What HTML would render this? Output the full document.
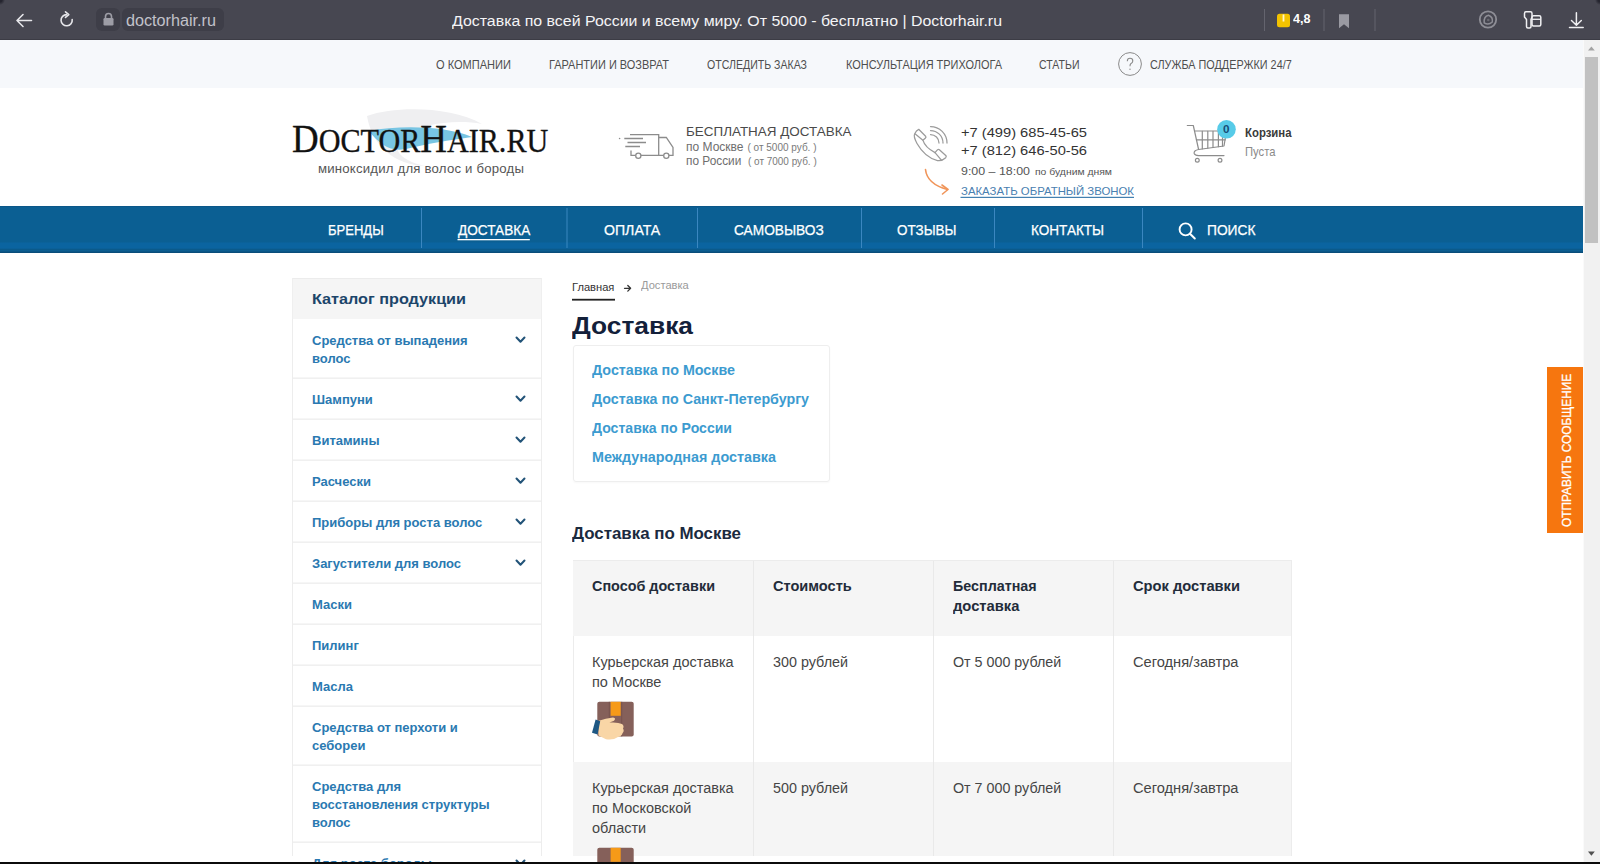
<!DOCTYPE html>
<html><head><meta charset="utf-8">
<style>
*{margin:0;padding:0;box-sizing:border-box}
html,body{width:1600px;height:864px;overflow:hidden;background:#fff;font-family:"Liberation Sans",sans-serif}
.a{position:absolute;white-space:nowrap;transform-origin:0 0}
.r{position:absolute}
svg{position:absolute;overflow:visible}
</style></head><body>
<!-- browser chrome -->
<div class="r" style="left:0;top:0;width:1600px;height:40px;background:#474751"></div>
<div class="r" style="left:0;top:0;width:6px;height:5px;background:radial-gradient(circle at 0 0,#25252f 0,#25252f 2px,rgba(71,71,81,0) 5px)"></div>
<div class="r" style="left:1594px;top:0;width:6px;height:5px;background:radial-gradient(circle at 100% 0,#25252f 0,#25252f 2px,rgba(71,71,81,0) 5px)"></div>
<div class="r" style="left:96px;top:8px;width:24px;height:23px;border-radius:6px;background:#3e3e48"></div>
<div class="r" style="left:122px;top:8px;width:102px;height:23px;border-radius:6px;background:#3e3e48"></div>
<svg style="left:0;top:0" width="1600" height="40">
  <!-- back arrow -->
  <path d="M31.5 20.5H17M23 14.5L17 20.5L23 26.5" fill="none" stroke="#e6e6ea" stroke-width="1.6" stroke-linecap="round" stroke-linejoin="round"/>
  <!-- reload -->
  <path d="M72.2 19.5A5.6 5.6 0 1 1 66.6 14.6" fill="none" stroke="#e6e6ea" stroke-width="1.6" stroke-linecap="round"/>
  <path d="M65.5 11.8L68.8 14.6L65.5 17.4" fill="none" stroke="#e6e6ea" stroke-width="1.6" stroke-linecap="round" stroke-linejoin="round"/>
  <!-- lock -->
  <rect x="103.5" y="18" width="10" height="7.5" rx="1.2" fill="#9d9da6"/>
  <path d="M105.5 18.5V16.5A3 3 0 0 1 111.5 16.5V18.5" fill="none" stroke="#9d9da6" stroke-width="1.6"/>
  <!-- separators -->
  <rect x="1264" y="9" width="1" height="22" fill="#64646e"/>
  <rect x="1323.5" y="9" width="1" height="22" fill="#64646e"/>
  <rect x="1374.5" y="9" width="1" height="22" fill="#64646e"/>
  <!-- rating icon -->
  <rect x="1277" y="13.8" width="13" height="13.5" rx="2.5" fill="#f2c200"/>
  <rect x="1282.6" y="14.5" width="1.8" height="7" fill="#fff6c8"/>
  <!-- bookmark -->
  <path d="M1339 14.2H1349V28.2L1344 24.2L1339 28.2Z" fill="#9a9aa2"/>
  <!-- alice -->
  <circle cx="1488" cy="19.5" r="8.2" fill="none" stroke="#8e8e96" stroke-width="1.8"/>
  <path d="M1484.2 22.8Q1483.5 16.5 1488.5 15.2Q1493.2 16.8 1492.3 22Q1488.5 25.5 1484.2 22.8Z" fill="none" stroke="#8e8e96" stroke-width="1.5" stroke-linejoin="round"/>
  <circle cx="1488.3" cy="20" r="1.3" fill="#6a6a72"/>
  <!-- extensions -->
  <path d="M1524.5 13.5Q1524.5 11.8 1526 11.8H1530.5Q1532 11.8 1532 13.5V17L1531 19.5V26.5Q1531 28 1529.5 28H1528Q1526.5 28 1526.5 26.5V19.5L1524.5 17Z" fill="none" stroke="#f0f0f2" stroke-width="1.5" stroke-linejoin="round"/>
  <rect x="1532" y="15.8" width="8.8" height="10.2" rx="1.5" fill="none" stroke="#f0f0f2" stroke-width="1.5"/>
  <line x1="1532" y1="19.3" x2="1540.8" y2="19.3" stroke="#f0f0f2" stroke-width="1.3"/>
  <!-- download -->
  <path d="M1576.4 12.7V25M1571.5 20.5L1576.4 25.2L1581.3 20.5M1569.5 27.6H1583.2" fill="none" stroke="#f0f0f2" stroke-width="1.5" stroke-linecap="round" stroke-linejoin="round"/>
</svg>

<!-- top bar -->
<div class="r" style="left:0;top:40px;width:1584px;height:48px;background:#f6f8fb"></div>
<div class="r" style="left:0;top:39px;width:1600px;height:1px;background:#3c3c45"></div>
<svg style="left:0;top:0" width="1600" height="100">
  <circle cx="1130" cy="64" r="11.4" fill="none" stroke="#8a8a8a" stroke-width="1"/>
  <path d="M1127.3 61.2Q1127.3 58.3 1130 58.3Q1132.8 58.3 1132.8 61Q1132.8 62.6 1130.8 63.7Q1130 64.3 1130 66.2" fill="none" stroke="#8a8a8a" stroke-width="1.1"/>
  <circle cx="1130" cy="69.2" r="0.7" fill="#8a8a8a"/>
</svg>

<!-- logo -->
<svg style="left:0;top:0" width="600" height="200">
  <path d="M367 116C395 106 450 106 482 124C455 119 420 124 404 136C390 147 398 160 425 166C395 165 372 146 367 116Z" fill="#efeff1"/>
  <path d="M369 131C400 125 446 126 472 137C450 140 426 144 406 149C391 152 380 145 369 131Z" fill="#78c5e3"/>
</svg>
<div class="a" style="left:292px;top:117.5px;font-family:'Liberation Serif',serif;color:#111;-webkit-text-stroke:0.35px #111;line-height:40px;white-space:nowrap;transform-origin:0 0;transform:scaleX(0.9)">
<span style="font-size:41px">D</span><span style="font-size:33.5px">OCTOR</span><span style="font-size:41px">H</span><span style="font-size:33.5px">AIR.RU</span>
</div>
<div class="a" id="tag" style="left:318px;top:162px;font-size:13.2px;line-height:14px;color:#555;letter-spacing:0.2px">миноксидил для волос и бороды</div>

<!-- truck -->
<svg style="left:0;top:0" width="1600" height="210">
  <g fill="none" stroke="#8c8c8c" stroke-width="1.3">
    <path d="M630 134.7H658.7V155.3"/>
    <path d="M658.7 137.5H666.3L673 147.5V155.3H669"/>
    <path d="M631 150.5V155.3H635.5M641 155.3H663.5"/>
    <circle cx="638.3" cy="155.8" r="2.6"/>
    <circle cx="666.3" cy="155.8" r="2.6"/>
    <path d="M624.3 138.5H643M627.5 142.5H646M625.3 146.5H640"/>
  </g>
  <circle cx="619.6" cy="138.5" r="0.8" fill="#8c8c8c"/>
  <!-- phone -->
  <g fill="none" stroke="#9b9b9b" stroke-width="1.25" stroke-linejoin="round" stroke-linecap="round">
    <path d="M918.7 129.3L925.6 136.2Q926.4 137.2 925.5 138.1L922.9 140.2Q925 147.5 935 152.6L937.4 149.9Q938.4 148.9 939.4 149.7L946 155.7Q946.6 156.6 945.7 157.7Q942 161.2 937.5 160.6Q925 157.5 917 143.5Q913.2 136.5 914.7 133.8Q916.3 130.2 918.7 129.3Z"/>
    <path d="M915 133.8L922.9 140.2M935 152.6L941 159.7"/>
    <path d="M930.5 134.5A8.5 8.5 0 0 1 939 143M930.5 130.5A12.5 12.5 0 0 1 943 143M930.5 126.5A16.5 16.5 0 0 1 947 143"/>
  </g>
  <!-- orange arrow -->
  <path d="M925.5 169.5Q927 184 947.5 189.5" fill="none" stroke="#f0955a" stroke-width="1.6" stroke-linecap="round"/>
  <path d="M942 185L948 189.5L942.5 194" fill="none" stroke="#f0955a" stroke-width="1.6" stroke-linecap="round" stroke-linejoin="round"/>
  <!-- underline callback -->
  <rect x="960.5" y="196.8" width="173.5" height="1.1" fill="#2f73a8"/>
  <!-- cart -->
  <g fill="none" stroke="#8c8c8c" stroke-width="1.2" stroke-linejoin="round" stroke-linecap="round">
    <path d="M1187.3 125.5H1193.3L1198.6 149.5"/>
    <path d="M1194.8 131H1226.5L1224 146L1198.6 149.5"/>
    <path d="M1196.4 139.8H1225.3"/>
    <path d="M1202.3 131.3V148.8M1207.8 131.3V148.1M1213 131.3V147.4M1218.4 131.3V146.7M1222.5 131.3V146.2"/>
    <path d="M1198.6 149.5Q1193.5 150.5 1194.2 153.5Q1195 155.6 1198.5 155.6H1224"/>
    <circle cx="1197.3" cy="160.3" r="1.9"/>
    <circle cx="1220" cy="160.3" r="1.9"/>
  </g>
  <circle cx="1226.5" cy="129.3" r="9.3" fill="#57cbe8"/>
</svg>

<!-- nav -->
<div class="r" style="left:0;top:206px;width:1583px;height:47px;background:linear-gradient(to bottom,#0a5283 0px,#0b5f93 1.5px,#0b5f93 36px,#0b64a0 37px,#0b64a0 42px,#0b5a8b 43.5px,#0b5f94 45px,#094d7a 46px,#094d7a 47px)"></div>
<svg style="left:0;top:200px" width="1600" height="60">
  <g fill="#3b87c0">
    <rect x="421" y="8" width="1" height="40"/>
    <rect x="566.5" y="8" width="1" height="40"/>
    <rect x="697" y="8" width="1" height="40"/>
    <rect x="861" y="8" width="1" height="40"/>
    <rect x="994" y="8" width="1" height="40"/>
    <rect x="1142" y="8" width="1" height="40"/>
  </g>
  <rect x="457.5" y="39" width="72.3" height="1.3" fill="#fff"/>
  <circle cx="1185.6" cy="29.4" r="6" fill="none" stroke="#fff" stroke-width="1.9"/>
  <path d="M1190 33.8L1194.8 38.5" stroke="#fff" stroke-width="2" stroke-linecap="round"/>
</svg>

<!-- sidebar -->
<div class="r" style="left:292px;top:278px;width:250px;height:578px;border:1px solid #ededed;border-top:0;border-bottom:0"></div>
<div class="r" style="left:292px;top:277.5px;width:250px;height:41.5px;background:#f5f5f5;border-top:1px solid #ececec;border-left:1px solid #efefef;border-right:1px solid #efefef"></div>
<svg style="left:0;top:0" width="600" height="864">
  <g fill="#ededed">
    <rect x="293" y="377.5" width="248" height="1.3"/>
    <rect x="293" y="418.5" width="248" height="1.3"/>
    <rect x="293" y="459.5" width="248" height="1.3"/>
    <rect x="293" y="500.5" width="248" height="1.3"/>
    <rect x="293" y="541.5" width="248" height="1.3"/>
    <rect x="293" y="582.5" width="248" height="1.3"/>
    <rect x="293" y="623.5" width="248" height="1.3"/>
    <rect x="293" y="664.5" width="248" height="1.3"/>
    <rect x="293" y="705.5" width="248" height="1.3"/>
    <rect x="293" y="764.5" width="248" height="1.3"/>
    <rect x="293" y="841.5" width="248" height="1.3"/>
  </g>
  <g fill="none" stroke="#225378" stroke-width="2" stroke-linecap="round" stroke-linejoin="round">
    <path d="M516.5 337.5L520.5 341.8L524.5 337.5"/>
    <path d="M516.5 396.5L520.5 400.8L524.5 396.5"/>
    <path d="M516.5 437.5L520.5 441.8L524.5 437.5"/>
    <path d="M516.5 478.5L520.5 482.8L524.5 478.5"/>
    <path d="M516.5 519.5L520.5 523.8L524.5 519.5"/>
    <path d="M516.5 560.5L520.5 564.8L524.5 560.5"/>
    <path d="M516.5 860.5L520.5 864.8L524.5 860.5"/>
  </g>
</svg>

<!-- main -->
<svg style="left:0;top:0" width="1600" height="864">
  <rect x="572" y="298.8" width="43" height="1.8" fill="#222"/>
  <path d="M624.5 288.3H630.5M627.8 285.5L630.6 288.3L627.8 291.1" fill="none" stroke="#333" stroke-width="1.3" stroke-linecap="round" stroke-linejoin="round"/>
</svg>
<div class="r" style="left:572.5px;top:344.5px;width:257px;height:137px;border:1px solid #eeeeee;border-radius:3px;box-shadow:0 1px 2px rgba(0,0,0,0.03)"></div>

<!-- table -->
<div class="r" style="left:572.5px;top:560.3px;width:719px;height:295.7px;border:1px solid #ececec;border-bottom:0;background:#fff"></div>
<div class="r" style="left:573px;top:561px;width:718px;height:75.2px;background:#f5f5f5"></div>
<div class="r" style="left:573px;top:761.5px;width:718px;height:94.5px;background:#f5f5f5"></div>
<svg style="left:0;top:0" width="1600" height="864">
  <g fill="#e9e9e9">
    <rect x="753" y="561" width="1" height="295"/>
    <rect x="933" y="561" width="1" height="295"/>
    <rect x="1113" y="561" width="1" height="295"/>
  </g>
  <!-- box icon 1 -->
  <g id="box1">
    <rect x="597.3" y="701.8" width="36.4" height="34.6" rx="2" fill="#85605a"/>
    <rect x="610.6" y="701.8" width="10.1" height="14" fill="#f69a18"/>
    <rect x="608.8" y="701.8" width="1" height="34.6" fill="#77534e"/>
    <rect x="621.2" y="701.8" width="1" height="34.6" fill="#77534e"/>
    <path d="M598 721Q606 718 613 717.5Q616.5 718 614 720.8L609.5 722.6Q618 722 622 724Q624.5 726 623 728.5Q624.6 731 622.5 733.2Q622 736 618 737Q613 740.5 606 739.2L598.5 735.5Z" fill="#f9d6a6"/>
    <path d="M592 732.8L595.6 719.6L600.2 721.2L597.6 734.4Z" fill="#1e5783"/>
  </g>
  <g transform="translate(0,146)">
    <rect x="597.3" y="701.8" width="36.4" height="34.6" rx="2" fill="#85605a"/>
    <rect x="610.6" y="701.8" width="10.1" height="14" fill="#f69a18"/>
  </g>
</svg>

<!-- orange tab -->
<div class="r" style="left:1547px;top:367px;width:35.7px;height:166px;background:#f6760f"></div>
<div class="a" style="left:1560.6px;top:526.7px;font-size:12.6px;line-height:12.6px;color:#fff;-webkit-text-stroke:0.3px #fff;transform:rotate(-90deg) scaleX(0.941);transform-origin:0 0">ОТПРАВИТЬ СООБЩЕНИЕ</div>

<!-- scrollbar -->
<div class="r" style="left:1584px;top:40px;width:16px;height:824px;background:#f1f1f1"></div>
<div class="r" style="left:1583px;top:40px;width:1px;height:824px;background:#fafafa"></div>
<div class="r" style="left:1585px;top:56.5px;width:13px;height:186.6px;background:#c1c1c1"></div>
<svg style="left:0;top:0" width="1600" height="864">
  <path d="M1588 50.6L1591.4 46.4L1594.8 50.6Z" fill="#a3a3a3"/>
  <path d="M1588 851.5L1591.4 855.7L1594.8 851.5Z" fill="#505050"/>
</svg>
<div class="a" style="left:126.00px;top:13.40px;font-size:16px;line-height:16px;color:#c2c2ca;transform:scaleX(1.0119)">doctorhair.ru</div>
<div class="a" style="left:452.00px;top:12.83px;font-size:15.5px;line-height:15.5px;color:#f4f4f6;transform:scaleX(1.0261)">Доставка по всей России и всему миру. От 5000 - бесплатно | Doctorhair.ru</div>
<div class="a" style="left:1293.00px;top:13.38px;font-size:12.5px;line-height:12.5px;color:#ffffff;font-weight:bold;transform:scaleX(1.0071)">4,8</div>
<div class="a" style="left:436.00px;top:58.55px;font-size:12.3px;line-height:12.3px;color:#4e4e4e;transform:scaleX(0.8991)">О КОМПАНИИ</div>
<div class="a" style="left:549.00px;top:58.55px;font-size:12.3px;line-height:12.3px;color:#4e4e4e;transform:scaleX(0.8923)">ГАРАНТИИ И ВОЗВРАТ</div>
<div class="a" style="left:707.00px;top:58.55px;font-size:12.3px;line-height:12.3px;color:#4e4e4e;transform:scaleX(0.8601)">ОТСЛЕДИТЬ ЗАКАЗ</div>
<div class="a" style="left:845.50px;top:58.55px;font-size:12.3px;line-height:12.3px;color:#4e4e4e;transform:scaleX(0.8902)">КОНСУЛЬТАЦИЯ ТРИХОЛОГА</div>
<div class="a" style="left:1039.40px;top:58.55px;font-size:12.3px;line-height:12.3px;color:#4e4e4e;transform:scaleX(0.8574)">СТАТЬИ</div>
<div class="a" style="left:1150.00px;top:58.55px;font-size:12.3px;line-height:12.3px;color:#4e4e4e;transform:scaleX(0.8807)">СЛУЖБА ПОДДЕРЖКИ 24/7</div>
<div class="a" style="left:686.00px;top:126.12px;font-size:12.8px;line-height:12.8px;color:#4a4a4a;transform:scaleX(1.0502)">БЕСПЛАТНАЯ ДОСТАВКА</div>
<div class="a" style="left:686.00px;top:141.04px;font-size:12.3px;line-height:12.3px;color:#6e6e6e;transform:scaleX(0.9763)">по Москве</div>
<div class="a" style="left:747.50px;top:143.00px;font-size:10px;line-height:10px;color:#7a7a7a">( от 5000 руб. )</div>
<div class="a" style="left:686.00px;top:155.04px;font-size:12.3px;line-height:12.3px;color:#6e6e6e;transform:scaleX(0.9626)">по России</div>
<div class="a" style="left:748.00px;top:157.00px;font-size:10px;line-height:10px;color:#7a7a7a;transform:scaleX(0.9955)">( от 7000 руб. )</div>
<div class="a" style="left:960.70px;top:125.72px;font-size:13.5px;line-height:13.5px;color:#333;transform:scaleX(1.0866)">+7 (499) 685-45-65</div>
<div class="a" style="left:960.70px;top:144.12px;font-size:13.5px;line-height:13.5px;color:#333;transform:scaleX(1.0866)">+7 (812) 646-50-56</div>
<div class="a" style="left:960.70px;top:166.20px;font-size:11.3px;line-height:11.3px;color:#555;transform:scaleX(1.0984)">9:00 – 18:00</div>
<div class="a" style="left:1035.00px;top:167.90px;font-size:9.3px;line-height:9.3px;color:#555;transform:scaleX(1.1166)">по будним дням</div>
<div class="a" style="left:960.70px;top:185.80px;font-size:11.3px;line-height:11.3px;color:#4a80b0;transform:scaleX(1.0086)">ЗАКАЗАТЬ ОБРАТНЫЙ ЗВОНОК</div>
<div class="a" style="left:1244.50px;top:126.60px;font-size:12px;line-height:12px;color:#3a3a3a;font-weight:bold;transform:scaleX(0.9472)">Корзина</div>
<div class="a" style="left:1244.50px;top:145.66px;font-size:12.4px;line-height:12.4px;color:#8a8a8a;transform:scaleX(0.9052)">Пуста</div>
<div class="a" style="left:1223.30px;top:124.15px;font-size:11px;line-height:11px;color:#174e78;font-weight:bold;transform:scaleX(1.0625)">0</div>
<div class="a" style="left:327.60px;top:223.04px;font-size:14.3px;line-height:14.3px;color:#ffffff;transform:scaleX(0.9114);-webkit-text-stroke:0.25px #fff">БРЕНДЫ</div>
<div class="a" style="left:457.50px;top:223.04px;font-size:14.3px;line-height:14.3px;color:#ffffff;transform:scaleX(0.9532);-webkit-text-stroke:0.25px #fff">ДОСТАВКА</div>
<div class="a" style="left:603.75px;top:223.04px;font-size:14.3px;line-height:14.3px;color:#ffffff;transform:scaleX(0.9870);-webkit-text-stroke:0.25px #fff">ОПЛАТА</div>
<div class="a" style="left:733.75px;top:223.04px;font-size:14.3px;line-height:14.3px;color:#ffffff;transform:scaleX(0.9585);-webkit-text-stroke:0.25px #fff">САМОВЫВОЗ</div>
<div class="a" style="left:897.30px;top:223.04px;font-size:14.3px;line-height:14.3px;color:#ffffff;transform:scaleX(0.9402);-webkit-text-stroke:0.25px #fff">ОТЗЫВЫ</div>
<div class="a" style="left:1031.25px;top:223.04px;font-size:14.3px;line-height:14.3px;color:#ffffff;transform:scaleX(0.9478);-webkit-text-stroke:0.25px #fff">КОНТАКТЫ</div>
<div class="a" style="left:1206.70px;top:223.04px;font-size:14.3px;line-height:14.3px;color:#ffffff;transform:scaleX(0.9637);-webkit-text-stroke:0.25px #fff">ПОИСК</div>
<div class="a" style="left:312.00px;top:290.82px;font-size:15.5px;line-height:15.5px;color:#1c456a;font-weight:bold;transform:scaleX(1.0445)">Каталог продукции</div>
<div class="a" style="left:312.00px;top:333.65px;font-size:13px;line-height:13px;color:#2a79b1;font-weight:bold">Средства от выпадения</div>
<div class="a" style="left:312.00px;top:351.65px;font-size:13px;line-height:13px;color:#2a79b1;font-weight:bold">волос</div>
<div class="a" style="left:312.00px;top:392.65px;font-size:13px;line-height:13px;color:#2a79b1;font-weight:bold">Шампуни</div>
<div class="a" style="left:312.00px;top:433.65px;font-size:13px;line-height:13px;color:#2a79b1;font-weight:bold">Витамины</div>
<div class="a" style="left:312.00px;top:474.65px;font-size:13px;line-height:13px;color:#2a79b1;font-weight:bold">Расчески</div>
<div class="a" style="left:312.00px;top:515.65px;font-size:13px;line-height:13px;color:#2a79b1;font-weight:bold">Приборы для роста волос</div>
<div class="a" style="left:312.00px;top:556.65px;font-size:13px;line-height:13px;color:#2a79b1;font-weight:bold">Загустители для волос</div>
<div class="a" style="left:312.00px;top:597.65px;font-size:13px;line-height:13px;color:#2a79b1;font-weight:bold">Маски</div>
<div class="a" style="left:312.00px;top:638.65px;font-size:13px;line-height:13px;color:#2a79b1;font-weight:bold">Пилинг</div>
<div class="a" style="left:312.00px;top:679.65px;font-size:13px;line-height:13px;color:#2a79b1;font-weight:bold">Масла</div>
<div class="a" style="left:312.00px;top:720.65px;font-size:13px;line-height:13px;color:#2a79b1;font-weight:bold">Средства от перхоти и</div>
<div class="a" style="left:312.00px;top:738.65px;font-size:13px;line-height:13px;color:#2a79b1;font-weight:bold">себореи</div>
<div class="a" style="left:312.00px;top:779.65px;font-size:13px;line-height:13px;color:#2a79b1;font-weight:bold">Средства для</div>
<div class="a" style="left:312.00px;top:797.65px;font-size:13px;line-height:13px;color:#2a79b1;font-weight:bold">восстановления структуры</div>
<div class="a" style="left:312.00px;top:815.65px;font-size:13px;line-height:13px;color:#2a79b1;font-weight:bold">волос</div>
<div class="a" style="left:312.00px;top:856.65px;font-size:13px;line-height:13px;color:#2a79b1;font-weight:bold">Для роста бороды</div>
<div class="a" style="left:572.00px;top:282.25px;font-size:11px;line-height:11px;color:#333;transform:scaleX(1.0127)">Главная</div>
<div class="a" style="left:641.00px;top:279.65px;font-size:11px;line-height:11px;color:#9a9a9a;transform:scaleX(1.0119)">Доставка</div>
<div class="a" style="left:572.40px;top:314.10px;font-size:24px;line-height:24px;color:#13203a;font-weight:bold;transform:scaleX(1.0970)">Доставка</div>
<div class="a" style="left:592.30px;top:362.60px;font-size:14px;line-height:14px;color:#3c9bd0;font-weight:bold;transform:scaleX(1.0203)">Доставка по Москве</div>
<div class="a" style="left:592.30px;top:391.70px;font-size:14px;line-height:14px;color:#3c9bd0;font-weight:bold;transform:scaleX(1.0175)">Доставка по Санкт-Петербургу</div>
<div class="a" style="left:592.30px;top:420.90px;font-size:14px;line-height:14px;color:#3c9bd0;font-weight:bold;transform:scaleX(1.0053)">Доставка по России</div>
<div class="a" style="left:592.30px;top:450.30px;font-size:14px;line-height:14px;color:#3c9bd0;font-weight:bold;transform:scaleX(1.0253)">Международная доставка</div>
<div class="a" style="left:572.00px;top:525.38px;font-size:16.5px;line-height:16.5px;color:#1b2a3e;font-weight:bold;transform:scaleX(1.0231)">Доставка по Москве</div>
<div class="a" style="left:592.00px;top:579.00px;font-size:14px;line-height:14px;color:#232c3a;font-weight:bold;transform:scaleX(1.0275)">Способ доставки</div>
<div class="a" style="left:772.50px;top:579.00px;font-size:14px;line-height:14px;color:#232c3a;font-weight:bold;transform:scaleX(1.0399)">Стоимость</div>
<div class="a" style="left:953.00px;top:579.00px;font-size:14px;line-height:14px;color:#232c3a;font-weight:bold;transform:scaleX(1.0213)">Бесплатная</div>
<div class="a" style="left:953.00px;top:599.00px;font-size:14px;line-height:14px;color:#232c3a;font-weight:bold;transform:scaleX(1.0526)">доставка</div>
<div class="a" style="left:1132.80px;top:579.00px;font-size:14px;line-height:14px;color:#232c3a;font-weight:bold;transform:scaleX(1.0489)">Срок доставки</div>
<div class="a" style="left:592.20px;top:655.30px;font-size:14px;line-height:14px;color:#454545;transform:scaleX(1.0336)">Курьерская доставка</div>
<div class="a" style="left:592.20px;top:675.30px;font-size:14px;line-height:14px;color:#454545;transform:scaleX(1.0340)">по Москве</div>
<div class="a" style="left:773.20px;top:655.30px;font-size:14px;line-height:14px;color:#454545;transform:scaleX(1.0246)">300 рублей</div>
<div class="a" style="left:953.00px;top:655.30px;font-size:14px;line-height:14px;color:#454545;transform:scaleX(1.0201)">От 5 000 рублей</div>
<div class="a" style="left:1132.50px;top:655.30px;font-size:14px;line-height:14px;color:#454545;transform:scaleX(1.0460)">Сегодня/завтра</div>
<div class="a" style="left:592.20px;top:780.60px;font-size:14px;line-height:14px;color:#454545;transform:scaleX(1.0336)">Курьерская доставка</div>
<div class="a" style="left:592.20px;top:800.60px;font-size:14px;line-height:14px;color:#454545;transform:scaleX(1.0340)">по Московской</div>
<div class="a" style="left:592.20px;top:820.60px;font-size:14px;line-height:14px;color:#454545;transform:scaleX(1.0340)">области</div>
<div class="a" style="left:773.20px;top:780.60px;font-size:14px;line-height:14px;color:#454545;transform:scaleX(1.0246)">500 рублей</div>
<div class="a" style="left:953.00px;top:780.60px;font-size:14px;line-height:14px;color:#454545;transform:scaleX(1.0201)">От 7 000 рублей</div>
<div class="a" style="left:1132.50px;top:780.60px;font-size:14px;line-height:14px;color:#454545;transform:scaleX(1.0460)">Сегодня/завтра</div>
<div class="r" style="left:0;top:862px;width:1600px;height:2px;background:#0b0b0b"></div>
</body></html>
